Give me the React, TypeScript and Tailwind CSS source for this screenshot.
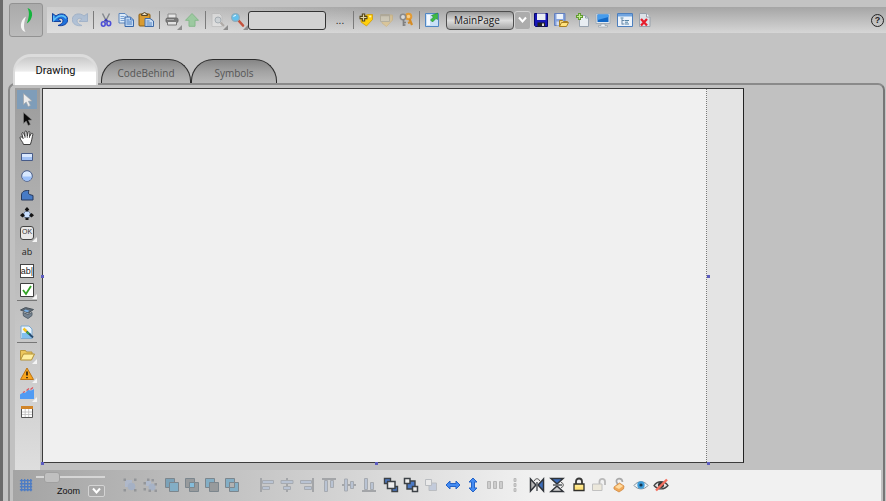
import { useState } from 'react';
import type { ReactNode } from 'react';
import clsx from 'clsx';

interface Tool {
  label: string;
  icon: ReactNode;
  more?: boolean;
}

interface ToolButtonProps extends Tool {
  className?: string;
  active?: boolean;
  onClick?: () => void;
}

const edge = '#3c4146';

function Icon({ children, size = 16, dim = false }: { children: ReactNode; size?: number; dim?: boolean }) {
  return (
    <svg width={size} height={size} viewBox="0 0 16 16" fill="none" aria-hidden="true" opacity={dim ? 0.45 : 1}>
      {children}
    </svg>
  );
}

function ToolButton({ label, icon, more, className, active, onClick }: ToolButtonProps) {
  return (
    <button type="button" aria-label={label} title={label} onClick={onClick} className={clsx('relative flex w-5 shrink-0 items-center justify-center', active && 'bg-[#7f9db9]', className)}>
      {icon}
      {more && (
        <svg className="absolute right-0 bottom-0" width="5" height="5" viewBox="0 0 5 5" aria-hidden="true">
          <path d="M5 0v5H0z" fill="currentColor" />
        </svg>
      )}
    </button>
  );
}

function Separator() {
  return <span className="mr-[2px] ml-[3px] h-[18px] w-px shrink-0 bg-[#7b7b7b]" />;
}

/* Top bar */

const historyTools: Tool[] = [
  {
    label: 'Undo',
    icon: (
      <Icon>
        <path d="M.5 1.500v8H9L6.200 7C8 5.600 11 6.500 11 8.800c0 2.600-2.500 3.800-5 4.700 5.500 1 9.700-1.500 9.700-6C15.700 2 8.500 0 4 4z" fill="#1f72dc" stroke="#0a3796" strokeWidth=".9" />
        <path d="M1.800 3.500v4.800l2.500-2.600C7.500 3 12.500 3 14 6.500" stroke="#5ec3f8" strokeWidth="1.400" />
      </Icon>
    ),
  },
  {
    label: 'Redo',
    icon: (
      <Icon dim>
        <path d="M15.500 1.500v8H7L9.800 7C8 5.600 5 6.500 5 8.800c0 2.600 2.500 3.800 5 4.700-5.500 1-9.700-1.500-9.700-6C.3 2 7.500 0 12 4z" fill="#86aad6" stroke="#5f86b8" strokeWidth=".9" />
      </Icon>
    ),
  },
];

const clipboardTools: Tool[] = [
  {
    label: 'Cut',
    icon: (
      <Icon>
        <path d="M4.500 1.500 8.800 10M11.500 1.500 7.200 10" stroke="#85898f" strokeWidth="1.500" />
        <ellipse cx="5.300" cy="12" rx="1.900" ry="2.200" stroke="#4d4fd6" strokeWidth="1.600" />
        <ellipse cx="10.800" cy="11.500" rx="1.900" ry="2.200" stroke="#4d4fd6" strokeWidth="1.600" />
        <path d="m6.500 9 1.500-1.500L9.500 9" stroke="#3b3db8" strokeWidth="1.500" />
      </Icon>
    ),
  },
  {
    label: 'Copy',
    icon: (
      <Icon>
        <path d="M1 1.500h6L9.500 4v7H1z" fill="#dceaf8" stroke="#5c85bb" />
        <path d="M2.500 4.500h4M2.500 6.500h4M2.500 8.500h4" stroke="#7ba2d3" />
        <path d="M7 5h5.500L15.500 8v6.500H7z" fill="#c0d8f3" stroke="#3767a9" />
        <path d="M12.500 5v3h3M8.500 8h3M8.500 10h5.500M8.500 12h5.500" stroke="#4f80c1" />
      </Icon>
    ),
  },
  {
    label: 'Paste',
    icon: (
      <Icon>
        <rect x="1" y="2" width="11" height="12" rx="1" fill="#d99b31" stroke="#8b5e14" />
        <path d="M3.500 3.500h6V2H8c0-2-3-2-3 0H3.500z" fill="#e8dcc2" stroke="#574525" />
        <path d="M7 6.500h5L15.500 9v5.500H7z" fill="#c9ddf4" stroke="#3f6ba7" />
        <path d="M8.500 9h3M8.500 11h5.500M8.500 13h5.500" stroke="#5585c2" />
      </Icon>
    ),
  },
];

const outputTools: Tool[] = [
  {
    label: 'Print',
    more: true,
    icon: (
      <Icon>
        <path d="M4 6V2h8v4" fill="#e6e6e6" stroke="#8a8a8a" />
        <rect x="2" y="6" width="12" height="4.500" rx="1.500" fill="#797979" stroke="#6a6a6a" />
        <path d="M3.500 9.500h9v3.500h-9z" fill="#e2e2e2" stroke="#777" />
        <path d="M3 7.500h7" stroke="#aaa" />
      </Icon>
    ),
  },
  {
    label: 'Export',
    icon: (
      <Icon>
        <path d="m8 1.500 6.500 6.800H11v6H5v-6H1.500z" fill="#9cc9a0" stroke="#86b88b" />
      </Icon>
    ),
  },
];

const searchTools: Tool[] = [
  {
    label: 'Find in page',
    more: true,
    icon: (
      <Icon dim>
        <path d="M2 1.500h7.500L12 4v10.500H2z" fill="#f2f2f2" stroke="#b5b5b5" />
        <circle cx="8" cy="8" r="3" fill="#d0dbe3" stroke="#7b8d99" />
        <path d="m10.500 10.500 3.500 3.500" stroke="#898078" strokeWidth="2" />
      </Icon>
    ),
  },
  {
    label: 'Search',
    more: true,
    icon: (
      <Icon>
        <path d="m8.500 8.500 4.500 5" stroke="#c4523c" strokeWidth="2.600" strokeLinecap="round" />
        <circle cx="5.500" cy="5.500" r="3.900" fill="#65c1ed" stroke="#8fabba" strokeWidth="1.200" />
        <path d="M3.500 4.800c.5-1 1.500-1.500 2.500-1.400" stroke="#d4f2ff" strokeWidth="1.200" />
      </Icon>
    ),
  },
];

const tagTools: Tool[] = [
  {
    label: 'Add tag',
    icon: (
      <Icon>
        <path d="M3 6 9.500 2.500h5V7.500L8.500 14 3 10z" fill="#ffd00b" stroke="#d29a08" strokeWidth=".8" />
        <circle cx="12.200" cy="4.500" r="1.100" fill="#fff2a8" />
        <path d="M5.500 1.500v8M1.500 5.500h8" stroke="#514316" strokeWidth="3.400" />
        <path d="M5.500 2.500v6M2.500 5.500h6" stroke="#dfd3a4" strokeWidth="1.200" />
      </Icon>
    ),
  },
  {
    label: 'Edit tag',
    icon: (
      <Icon dim>
        <path d="M4 7.500 10 3h4.500v5l-6 6.500L4 11z" fill="#f3c868" stroke="#d3aa57" />
        <path d="M2.500 2.500h9v7h-9z" fill="#e0d4b0" stroke="#a79b78" />
        <path d="M3 3.500h8" stroke="#a89a76" strokeWidth="1.500" />
      </Icon>
    ),
  },
  {
    label: 'Keys',
    icon: (
      <Icon>
        <circle cx="10.500" cy="4.500" r="2.800" fill="#f8cd85" stroke="#e39c35" strokeWidth="2" />
        <path d="m11.500 7 2.500 6M12.500 10l-2.500 1" stroke="#d58b24" strokeWidth="2.200" />
        <circle cx="5" cy="5" r="2.700" fill="#d9d9d9" stroke="#8a8a8a" strokeWidth="1.500" />
        <path d="M5.500 7.500V14M5.500 10.500H8M5.500 13h2" stroke="#808080" strokeWidth="1.700" />
      </Icon>
    ),
  },
];

const pageTools: Tool[][] = [
  [
    {
      label: 'Save',
      icon: (
        <Icon>
          <path d="M1.500 1.500h13v13h-12l-1-1z" fill="#1717b8" stroke="#06066b" />
          <path d="M4 1.500h8.500V8H4z" fill="#e9edf3" />
          <path d="M4.500 10.500h7.500v4H4.500z" fill="#222" />
          <path d="M9 11.500h2V14H9z" fill="#dadada" />
        </Icon>
      ),
    },
    {
      label: 'Save and open',
      icon: (
        <Icon>
          <path d="M1.500 1.500h10.500v12H1.500z" fill="#86a4df" stroke="#6681bd" />
          <path d="M3.500 2h6.500v5H3.500z" fill="#eef3fa" />
          <path d="M3.500 9.500h4v4h-4z" fill="#d4dded" />
          <path d="M6.500 14.500V8.500h3l1 1h4V11" fill="#f7d675" stroke="#a97f22" />
          <path d="m6.500 14.500 2-4h7l-2 4z" fill="#ffe27d" stroke="#a97f22" />
        </Icon>
      ),
    },
  ],
  [
    {
      label: 'New page',
      icon: (
        <Icon>
          <path d="M4.500 3.500h6L13.500 6v8.500h-9z" fill="#e8edf2" stroke="#98a3af" />
          <path d="M10.500 3.500V6h3" stroke="#98a3af" />
          <path d="M4.500 1v7M1 4.500h7" stroke="#5f9a2f" strokeWidth="3" />
          <path d="M4.500 2v5M2 4.500h5" stroke="#c4ec93" strokeWidth="1.200" />
        </Icon>
      ),
    },
    {
      label: 'Preview',
      icon: (
        <Icon>
          <path d="M1 1.500h14v10H1z" fill="#e2e8ee" stroke="#a3adb6" />
          <path d="M2.500 2.500h11v7.500h-11z" fill="#1469c6" />
          <path d="M2.500 2.500h11V5l-11 3z" fill="#469cec" />
          <path d="M6 12h4v1.500h2.500V15h-9v-1.500H6z" fill="#eef1f3" stroke="#98a2ab" strokeWidth=".7" />
        </Icon>
      ),
    },
  ],
  [
    {
      label: 'Structure',
      icon: (
        <Icon>
          <path d="M.5 1.500h15v13H.5z" fill="#ecf3fb" stroke="#4d7fbd" />
          <path d="M1 2h14v2.500H1z" fill="#70a4df" />
          <path d="M5 6.500v6M5 8.500h2.500M5 12h2.500" stroke="#6687a6" />
          <path d="M3.500 6h3M8 8.500h4M8 12h4M8 10.200h3" stroke="#5685a5" />
        </Icon>
      ),
    },
    {
      label: 'Delete page',
      icon: (
        <Icon>
          <path d="M2.500 1.500h7L13 5v9.500H2.500z" fill="#dce2e8" stroke="#98a1ac" />
          <path d="M9.500 1.500V5H13" fill="#f8fafc" stroke="#98a1ac" />
          <path d="m4 7 6 6.500M10 7l-6 6.500" stroke="#e61d2c" strokeWidth="2.300" />
        </Icon>
      ),
    },
  ],
];

/* Drawing palette */

const arrowPath = 'M4.500 1.500v11l2.700-2.400 2 4.400 2.200-1-2-4.300 3.600-.3z';

const folder = (
  <Icon>
    <path d="M1.500 13V3.500h5l1 1.500H13v2" fill="#eec85e" stroke="#b8963f" />
    <path d="m1.500 13 3-6h11l-3 6z" fill="#ffefa1" stroke="#b39137" />
  </Icon>
);

const paletteSections: Tool[][] = [
  [
    { label: 'Select', icon: <Icon><path d={arrowPath} fill="#ececec" stroke="#a2a6ab" strokeWidth=".7" /></Icon> },
    { label: 'Direct select', icon: <Icon><path d={arrowPath} fill="#0b0b0b" stroke="#888" strokeWidth=".6" /></Icon> },
    {
      label: 'Pan',
      icon: (
        <Icon>
          <path d="M4.500 14.500C4 12 1 9.500 1 7.700c0-1 1.400-1.200 2.200-.2l.9 1L2.900 4c-.3-1.400 1.300-1.900 1.800-.6L6 6.500l-.2-4.400C5.800.7 7.600.7 7.800 2l.5 4.300.8-4c.3-1.300 2-1 1.800.4l-.4 4 1.600-2.900c.7-1.100 2.100-.4 1.700.8-.7 2.500-1 6.500-2.500 9.900z" fill="#fff" stroke="#2a2a2a" strokeWidth=".9" />
          <path d="M6 6.500V8M8.300 6.300V8M10.500 6.700V8" stroke="#555" strokeWidth=".8" />
        </Icon>
      ),
    },
    {
      label: 'Rectangle',
      icon: (
        <Icon>
          <path d="M2.500 4.500h11v7h-11z" fill="#d9e8ff" stroke="#475b88" />
          <path d="M3 8h10v3H3z" fill="#a3c2f5" />
        </Icon>
      ),
    },
    {
      label: 'Ellipse',
      icon: (
        <Icon>
          <circle cx="8" cy="8" r="5.300" fill="#d8e8ff" stroke="#475b88" />
          <path d="M3.300 8.500h9.400A4.800 4.800 0 0 1 8 12.800a4.800 4.800 0 0 1-4.700-4.300z" fill="#9dc1fa" />
        </Icon>
      ),
    },
    { label: 'Polygon', icon: <Icon><path d="M2.500 13V8c0-2.500 2-4.500 6-4.500h1.500C9.200 5 9.200 7 10.500 7.500l3.500 1V13z" fill="#477bc6" stroke="#283b5e" /></Icon> },
    {
      label: 'Edit points',
      icon: (
        <Icon>
          <path d="M8 4.500c2 1 4 3 4 5.500L8 12.500 4 10c0-2.500 2-4.500 4-5.500z" fill="#cae0ff" stroke="#59708f" />
          <path d="M8 1l2.300 2.500L8 6 5.700 3.500zM3.500 7 6 9.300l-2.500 2.200L1 9.300zM12.500 7 15 9.300l-2.500 2.200L10 9.300z" fill="#141414" />
          <path d="M6.500 11.500h3V14h-3z" fill="#141414" />
        </Icon>
      ),
    },
    {
      label: 'Button',
      more: true,
      icon: (
        <span className="flex h-[14px] w-[14px] items-center justify-center rounded-[3px] border border-[#444] bg-[#e9e9e9] font-['Liberation_Sans'] text-[7px] text-[#333]">OK</span>
      ),
    },
    { label: 'Label', icon: <span className="font-['Open_Sans'] text-[9px] text-[#222]">ab</span> },
    {
      label: 'Text box',
      icon: (
        <span className="flex h-[14px] w-[14px] items-center justify-center border border-[#444] bg-white font-['Liberation_Sans'] text-[9px] leading-3 text-[#222]">ab|</span>
      ),
    },
    {
      label: 'Check box',
      more: true,
      icon: (
        <Icon>
          <path d="M1.500 1.500h13v13h-13z" fill="#fff" stroke="#3f3f3f" />
          <path d="m4 8 3 4 5-8" stroke="#32a324" strokeWidth="1.800" />
        </Icon>
      ),
    },
  ],
  [
    {
      label: 'Symbol',
      icon: (
        <Icon>
          <path d="m1.500 5 5-2.500 8 2-5 3.500z" fill="#5d6974" stroke="#4b545c" />
          <path d="m4 7.500 5 2 4-2v3l-4 3-4.500-2.500z" fill="#758391" stroke="#56626d" />
          <path d="m6.500 4.500 4 1.200-2 1.500-4-1.200z" fill="#78aee5" />
        </Icon>
      ),
    },
    {
      label: 'Wizard',
      icon: (
        <Icon>
          <path d="M2 2h8l3 3v9.500H2z" fill="#e9f5ff" stroke="#7eaad0" />
          <path d="M3 9h9v5H3z" fill="#81bfef" />
          <path d="m6 6 8 7.500" stroke="#294c70" strokeWidth="2" />
          <path d="m4.500 4.500 3 3" stroke="#f6c31e" strokeWidth="2.500" />
          <path d="m8 8 2 2" stroke="#3ca545" strokeWidth="2" />
        </Icon>
      ),
    },
  ],
  [
    { label: 'Open library', more: true, icon: folder },
    {
      label: 'Alarms',
      more: true,
      icon: (
        <Icon>
          <path d="m8 2 6.500 11.500h-13z" fill="#f9a51c" stroke="#bd7414" strokeLinejoin="round" />
          <path d="M8 5.500v4M8 11v1.300" stroke="#36230b" strokeWidth="1.700" />
        </Icon>
      ),
    },
    {
      label: 'Trend',
      more: true,
      icon: (
        <Icon>
          <path d="M1 14V9.500l3-2 2 .5 3-3 3 .5 3-1.500V14z" fill="#519bf3" />
          <path d="m4 7.500 2-1M7.500 5.500l2.500-2M11.500 4.500l2.500-2" stroke="#d95461" strokeWidth="1.300" />
        </Icon>
      ),
    },
    {
      label: 'Data grid',
      icon: (
        <Icon>
          <path d="M2.500 2.500h11v11h-11z" fill="#fff" stroke="#555" />
          <path d="M2 2h12v3H2z" fill="#d18529" />
          <path d="M3 8h10M3 10.500h10M6.200 5v8M9.700 5v8" stroke="#bcbcbc" strokeWidth=".8" />
        </Icon>
      ),
    },
  ],
];

/* Bottom bar */

function Combine({ fills, center }: { fills: [string, string]; center?: string }) {
  return (
    <Icon size={16}>
      <path d="M1.500 1.500h9v9h-9z" fill={fills[0]} stroke="#7c868d" />
      <path d="M5.500 5.500h9v9h-9z" fill={fills[1]} stroke="#7c868d" />
      {center && <path d="M5.500 5.500h5v5h-5z" fill={center} stroke="#7c868d" />}
    </Icon>
  );
}

function Align({ bars, line }: { bars: string; line: string }) {
  return (
    <Icon>
      <path d={line} stroke="#a3a5a8" strokeWidth="2" />
      <path d={bars} fill="#b9c3d3" stroke="#a6aab0" />
    </Icon>
  );
}

const combineTools: Tool[][] = [
  [
    {
      label: 'Group',
      icon: (
        <Icon dim>
          <path d="M3 3h7v7H3z" fill="#a9bfe6" />
          <circle cx="9.500" cy="9.500" r="3.800" fill="#93add9" />
          <path d="M1.500 1.500H4V4H1.500zM12 1.500h2.500V4H12zM1.500 12H4v2.500H1.500zM12 12h2.500v2.500H12z" fill="#6b7078" />
        </Icon>
      ),
    },
    {
      label: 'Ungroup',
      icon: (
        <Icon dim>
          <path d="M4 4h5v5H4z" fill="#a9bfe6" />
          <circle cx="10" cy="10" r="3.500" fill="#93add9" />
          <path d="M1.500 5H4v2.500H1.500zM5 1.500h2.500V4H5zM9.500 2H12v2.500H9.500zM12.500 6H15v2.500h-2.500zM1.500 11H4v2.500H1.500zM6.500 12.500H9V15H6.500zM12.500 12.500H15V15h-2.500z" fill="#6b7078" />
        </Icon>
      ),
    },
  ],
  [
    { label: 'Union', icon: <Combine fills={['#7ba2b8', '#83aec5']} /> },
    { label: 'Intersect', icon: <Combine fills={['#979a9c', '#979a9c']} center="#85bddb" /> },
    { label: 'Subtract', icon: <Combine fills={['#83aec5', '#979a9c']} /> },
    { label: 'Exclude', icon: <Combine fills={['#83aec5', '#83aec5']} center="#b2b2b2" /> },
  ],
];

const arrangeTools: Tool[][] = [
  [
    { label: 'Align left', icon: <Align line="M2 1v14" bars="M3.500 3.500h11v3h-11zM3.500 9.500h7v3h-7z" /> },
    { label: 'Align center', icon: <Align line="M8 1v14" bars="M2 3.500h12v3H2zM4.500 9.500h7v3h-7z" /> },
    { label: 'Align right', icon: <Align line="M14 1v14" bars="M1.500 3.500h11v3h-11zM5.500 9.500h7v3h-7z" /> },
  ],
  [
    { label: 'Align top', icon: <Align line="M1 2h14" bars="M3.500 3.500h3v11h-3zM9.500 3.500h3v7h-3z" /> },
    { label: 'Align middle', icon: <Align line="M1 8h14" bars="M3.500 2h3v12h-3zM9.500 4.500h3v7h-3z" /> },
    { label: 'Align bottom', icon: <Align line="M1 14h14" bars="M3.500 1.500h3v11h-3zM9.500 5.500h3v7h-3z" /> },
  ],
  [
    {
      label: 'Bring to front',
      icon: (
        <Icon>
          <path d="M1.500 1.500h6v5h-6zM9 9.500h5.500v5H9z" fill="#4b79c4" stroke={edge} strokeWidth="1.400" />
          <path d="M4.500 4.500h7.500v7H4.500z" fill="#ededed" stroke={edge} strokeWidth="1.500" />
        </Icon>
      ),
    },
    {
      label: 'Send to back',
      icon: (
        <Icon>
          <path d="M4 4h8v8H4z" fill="#4b79c4" stroke={edge} strokeWidth="1.400" />
          <path d="M1.500 1.500h5.500v5H1.500zM9.500 9.500h5v5h-5z" fill="#ededed" stroke={edge} strokeWidth="1.500" />
        </Icon>
      ),
    },
    {
      label: 'Bring forward',
      icon: (
        <Icon dim>
          <path d="M6 6h7.500v7.500H6z" fill="#9fb1d4" stroke="#8c929b" />
          <path d="M2.500 2.500h6v6h-6z" fill="#f4f4f4" stroke="#8c929b" />
        </Icon>
      ),
    },
  ],
  [
    { label: 'Same width', icon: <Icon><path d="m1 8 4-4v2.500h6V4l4 4-4 4V9.500H5V12z" fill="#438bf2" stroke="#2463c7" /></Icon> },
    { label: 'Same height', icon: <Icon><path d="m8 1 4 4H9.500v6H12l-4 4-4-4h2.500V5H4z" fill="#438bf2" stroke="#2463c7" /></Icon> },
  ],
  [
    { label: 'Space across', icon: <Icon><path d="M.5 4.500h3v7h-3zM6.500 4.500h3v7h-3zM12.500 4.500h3v7h-3z" fill="#cdcdcd" stroke="#b6b6b6" /></Icon> },
    { label: 'Space down', icon: <Icon><path d="M7 1.500h2v3H7zM7 6.500h2v3H7zM7 11.500h2v3H7z" fill="#cfcfcf" stroke="#bababa" /></Icon> },
  ],
  [
    {
      label: 'Flip horizontal',
      icon: (
        <Icon>
          <path d="m1.500 2 5 5.500v1l-5 5.500z" fill="#b9b9b9" stroke="#30343a" strokeWidth="1.500" />
          <path d="m14.500 2-5 5.500v1l5 5.500z" fill="#3c6dba" stroke="#30343a" strokeWidth="1.500" />
          <path d="M8 5v9" stroke="#30343a" strokeWidth="1.200" />
          <path d="M5.500 4c0-3 5-3 5 0" stroke="#555" />
        </Icon>
      ),
    },
    {
      label: 'Flip vertical',
      icon: (
        <Icon>
          <path d="m2 1.500 5.500 5h1l5.500-5z" fill="#3c6dba" stroke="#30343a" strokeWidth="1.500" />
          <path d="m2 14.500 5.500-5h1l5.500 5z" fill="#d0d0d0" stroke="#30343a" strokeWidth="1.500" />
          <path d="M4 8h9" stroke="#30343a" strokeWidth="1.200" />
          <path d="M12 5.500c3 0 3 5 0 5" stroke="#555" />
        </Icon>
      ),
    },
  ],
  [
    {
      label: 'Lock',
      icon: (
        <Icon>
          <path d="M5 7V4.500c0-4 6-4 6 0V7" stroke="#373737" strokeWidth="1.800" />
          <path d="M3 7h10v6.500H3z" fill="#ffe27a" stroke="#31302c" strokeWidth="1.300" />
          <path d="M4 9h8" stroke="#fff0a5" />
        </Icon>
      ),
    },
    {
      label: 'Unlock',
      icon: (
        <Icon dim>
          <path d="M8.500 7V4.500c0-3.500 5.500-3.500 5.500 0V8" stroke="#777" strokeWidth="1.800" />
          <path d="M1.500 7h9.500v6.500H1.500z" fill="#e7dfc1" stroke="#888" />
        </Icon>
      ),
    },
    {
      label: 'Unlock all',
      icon: (
        <Icon>
          <path d="M7 8 5.500 5c-1-4 5.500-5 6 0" stroke="#a9a9a9" strokeWidth="1.700" />
          <path d="m3 10 5.500-4L13 9l-.5 3L8 15l-5-3z" fill="#f1a958" stroke="#d08a45" strokeWidth=".8" />
          <path d="m4 10 4.500-3L12 9l-4 3z" fill="#ffdca2" />
        </Icon>
      ),
    },
  ],
  [
    {
      label: 'Show',
      icon: (
        <Icon>
          <path d="M1 8.500C4.500 3.500 11.500 3.500 15 8.500c-3.500 4.500-10.500 4.500-14 0z" fill="#eef4f8" stroke="#84919b" />
          <circle cx="8" cy="8" r="3.700" fill="#3b9bd9" />
          <circle cx="8" cy="8" r="1.600" fill="#17374e" />
        </Icon>
      ),
    },
    {
      label: 'Hide',
      icon: (
        <Icon>
          <path d="M1 8.500C4.500 3.500 11.500 3.500 15 8.500c-3.500 4.500-10.500 4.500-14 0z" fill="#e2e2e2" stroke="#444" strokeWidth="1.300" />
          <circle cx="8" cy="8" r="3" fill="#353535" />
          <path d="m3 13.500 11-11" stroke="#f4705f" strokeWidth="2.400" />
        </Icon>
      ),
    },
  ],
];

function ToolGroup({ tools }: { tools: Tool[] }) {
  return (
    <div className="flex text-[#8e8e8e]">
      {tools.map((tool) => (
        <ToolButton key={tool.label} {...tool} className="h-5" />
      ))}
    </div>
  );
}

function TopBar() {
  return (
    <header className="flex items-center gap-1 pt-[3px] pl-[6px]">
      <button type="button" aria-label="Menu" className="flex h-[34px] w-[34px] shrink-0 items-center justify-center rounded-[3px] border border-[#929292] bg-gradient-to-b from-[#aaa] to-[#bbb]">
        <svg width="32" height="32" viewBox="0 0 32 32" aria-hidden="true">
          <path d="M17.500 4c7 2 5.500 12-.7 15.500C18.800 14 20 8.500 17.500 4z" fill="#16b43e" />
          <path d="M15.500 28C8.500 26 10 16 16 12.500 14 18 13 23.500 15.500 28z" fill="#f4f4f4" />
        </svg>
      </button>
      <div className="flex h-[26px] min-w-0 flex-1 items-center bg-[linear-gradient(to_right,#e2e2e2b0,#e2e2e200_320px),linear-gradient(#a5a5a5,#d6d6d6)] pr-[2px] pl-[3px]">
        <ToolGroup tools={historyTools} />
        <Separator />
        <ToolGroup tools={clipboardTools} />
        <Separator />
        <ToolGroup tools={outputTools} />
        <Separator />
        <ToolGroup tools={searchTools} />
        <input type="text" aria-label="Search text" className="h-[19px] w-[78px] shrink-0 rounded-[3px] border border-[#333] bg-[#d2d2d2] px-1 font-['Open_Sans'] text-[11px] outline-none" />
        <button type="button" aria-label="More search options" className="ml-1 w-5 shrink-0 font-['Liberation_Sans'] text-[10px] text-[#222]">
          ...
        </button>
        <Separator />
        <ToolGroup tools={tagTools} />
        <Separator />
        <ToolButton
          label="Go to page"
          className="h-5"
          icon={
            <Icon>
              <path d="M1.500 1.500h13v13h-13z" fill="#c9e0f7" stroke="#4f86c4" />
              <path d="M3 3h3v10H3z" fill="#f3f9ff" />
              <path d="M7.500 3.500 13.500 1v6.500L12 6.500 8.500 10l-2-2L9.500 5z" fill="#3dbb42" stroke="#218631" strokeWidth=".6" />
            </Icon>
          }
        />
        <div className="relative ml-1 flex h-[19px] w-[85px] shrink-0">
          <select aria-label="Page" className="h-full w-[68px] appearance-none rounded-[4px] border border-[#4e4e4e] bg-gradient-to-b from-[#999] via-[#ddd] to-[#a8a8a8] pl-[7px] font-['Open_Sans'] text-[10px] leading-4 text-[#161616] outline-none">
            <option>MainPage</option>
          </select>
          <span className="pointer-events-none flex w-[17px] items-center justify-center rounded-[3px] border border-[#d2d2d2] bg-[#acacac]">
            <Chevron />
          </span>
        </div>
        <div className="flex gap-[2px]">
          {pageTools.map((tools) => (
            <ToolGroup key={tools[0].label} tools={tools} />
          ))}
        </div>
        <button type="button" aria-label="Help" className="ml-auto flex h-[13px] w-[13px] shrink-0 items-center justify-center rounded-full border border-[#222] font-['Liberation_Sans'] text-[9px] leading-none font-bold text-[#222]">
          ?
        </button>
      </div>
    </header>
  );
}

function Chevron() {
  return (
    <svg width="9" height="8" viewBox="0 0 9 8" fill="none" aria-hidden="true">
      <path d="m1 1.500 3.500 4L8 1.500" stroke="#fff" strokeWidth="2" />
    </svg>
  );
}

function Tabs() {
  const [active, setActive] = useState('Drawing');
  const tabs = [
    { name: 'Drawing', width: 'w-[85px]' },
    { name: 'CodeBehind', width: 'w-[90px]' },
    { name: 'Symbols', width: 'w-[86px]' },
  ];

  return (
    <div role="tablist" className="relative z-10 mt-[17px] -mb-[2px] flex h-[31px] items-end pl-[10px]">
      {tabs.map(({ name, width }) => (
        <button
          key={name}
          type="button"
          role="tab"
          aria-selected={active === name}
          onClick={() => setActive(name)}
          className={clsx(
            width,
            active === name
              ? "mr-[3px] h-[31px] rounded-t-[18px] border-x-2 border-t-[3px] border-[#dcdcdc] bg-gradient-to-b from-[#c9c9c9] from-0% via-[#ececec] via-50% to-white to-55% font-['Roboto'] text-[11px] text-[#111]"
              : "mb-[2px] h-6 rounded-t-[22px] border border-b-0 border-[#2c2c2c] bg-gradient-to-b from-[#868686] via-[#a3a3a3] to-[#b8b8b8] pt-[3px] font-['Open_Sans'] text-[10px] text-[#555]",
          )}
        >
          {name}
        </button>
      ))}
    </div>
  );
}

function Palette() {
  const [selected, setSelected] = useState('Select');

  return (
    <div role="toolbar" aria-label="Drawing tools" className="flex w-[25px] shrink-0 flex-col items-start bg-gradient-to-b from-[#9c9c9c] to-[#dedede] pt-[2px] pl-[2px] text-[#f4f4f4]">
      {paletteSections.map((section, index) => (
        <div key={section[0].label} className="flex flex-col">
          {index > 0 && <span className="my-[1px] h-[2px] border-t border-[#777]" />}
          {section.map((tool) => (
            <ToolButton key={tool.label} {...tool} className="h-[19px]" active={selected === tool.label} onClick={() => setSelected(tool.label)} />
          ))}
        </div>
      ))}
    </div>
  );
}

function Canvas() {
  const handles = ['-left-[2px] top-1/2', '-left-[2px] -bottom-[4px]', 'left-1/2 -bottom-[4px]', '-right-[4px] top-1/2', '-right-[4px] -bottom-[4px]'];

  return (
    <main className="mr-[139px] mb-[7px] ml-[2px] flex min-w-0 flex-1 border border-[#3c3c3c] border-r-[#222] bg-[#e4e4e4]">
      <div className="relative flex-1 border-r border-dotted border-[#777] bg-[#f0f0f0]">
        {handles.map((position) => (
          <span key={position} className={clsx('absolute h-[3px] w-[3px] -translate-y-px bg-[#5c5cc0]', position)} />
        ))}
      </div>
      <div className="w-9" />
    </main>
  );
}

function BottomBar() {
  const [zoom, setZoom] = useState(15);

  return (
    <footer className="mr-[2px] ml-[3px] flex h-[31px] items-center bg-gradient-to-r from-[#a4a4a4] via-[#c9c9c9] via-30% to-[#f1f1f1] to-60% pb-[2px] pl-[3px]">
      <ToolButton
        label="Grid"
        className="h-5"
        icon={
          <Icon size={14}>
            <path d="M3 1v14M6.500 1v14M10 1v14M13.500 1v14M1 3h14M1 6.500h14M1 10h14M1 13.500h14" stroke="#4d7cc4" strokeWidth="1.600" />
          </Icon>
        }
      />
      <div className="flex w-[69px] shrink-0 flex-col">
        <input
          id="zoom"
          type="range"
          value={zoom}
          onChange={(event) => setZoom(Number(event.target.value))}
          className="h-3 w-full appearance-none bg-transparent [&::-webkit-slider-runnable-track]:h-[2px] [&::-webkit-slider-runnable-track]:bg-[#d6d6d6] [&::-webkit-slider-thumb]:-mt-[4px] [&::-webkit-slider-thumb]:h-[11px] [&::-webkit-slider-thumb]:w-4 [&::-webkit-slider-thumb]:appearance-none [&::-webkit-slider-thumb]:rounded-[3px] [&::-webkit-slider-thumb]:border [&::-webkit-slider-thumb]:border-[#a0a0a0] [&::-webkit-slider-thumb]:bg-[#c0c0c0]"
        />
        <div className="flex items-center justify-end gap-2">
          <label htmlFor="zoom" className="font-['Liberation_Sans'] text-[9px] leading-4 text-[#111]">
            Zoom
          </label>
          <button type="button" aria-label="Zoom presets" className="flex h-3 w-[17px] items-center justify-center rounded-[2px] border border-[#d4d4d4] bg-[#a8a8a8]">
            <Chevron />
          </button>
        </div>
      </div>
      <div className="ml-[15px] flex gap-[2px]">
        {combineTools.map((tools) => (
          <ToolGroup key={tools[0].label} tools={tools} />
        ))}
      </div>
      <div className="ml-[15px] flex gap-[2px]">
        {arrangeTools.map((tools) => (
          <ToolGroup key={tools[0].label} tools={tools} />
        ))}
      </div>
    </footer>
  );
}

export default function App() {
  return (
    <div className="flex h-screen w-full flex-col overflow-hidden border-l-[3px] border-[#6b6b6b] bg-[#c3c3c3]">
      <TopBar />
      <Tabs />
      <section className="mr-px ml-[5px] flex min-h-0 flex-1 flex-col rounded-t-[7px] border-2 border-b-0 border-[#8a8a8a] border-r-[#767676] bg-[#c1c1c1] pt-[3px]">
        <div className="flex min-h-0 flex-1 pl-[5px]">
          <Palette />
          <Canvas />
        </div>
        <BottomBar />
      </section>
    </div>
  );
}
